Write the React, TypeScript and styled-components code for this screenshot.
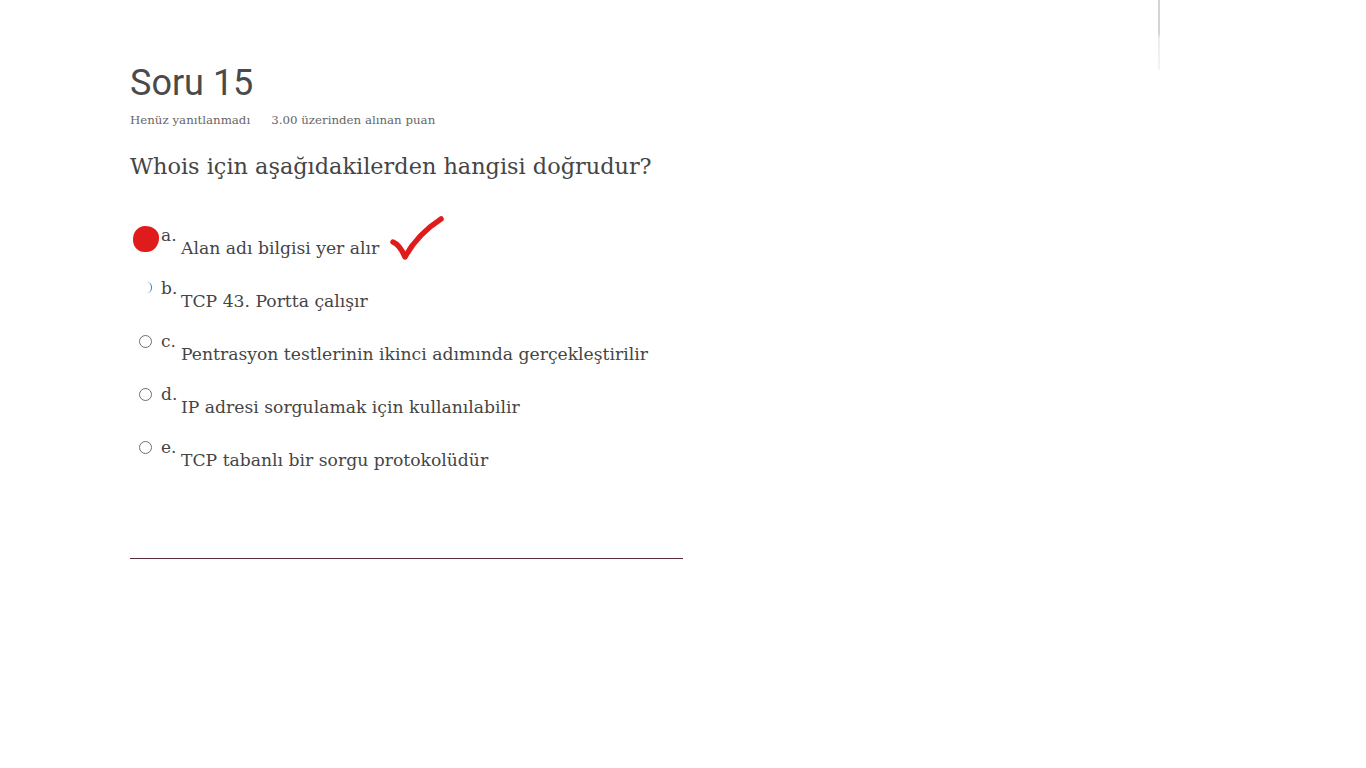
import styled, { createGlobalStyle } from 'styled-components';

const GlobalStyle = createGlobalStyle`
  html, body {
    margin: 0;
    padding: 0;
    background: #ffffff;
  }
`;

const options = [
  { letter: 'a', text: 'Alan adı bilgisi yer alır', mark: 'blob' },
  { letter: 'b', text: 'TCP 43. Portta çalışır', mark: 'arc' },
  { letter: 'c', text: 'Pentrasyon testlerinin ikinci adımında gerçekleştirilir', mark: 'radio' },
  { letter: 'd', text: 'IP adresi sorgulamak için kullanılabilir', mark: 'radio' },
  { letter: 'e', text: 'TCP tabanlı bir sorgu protokolüdür', mark: 'radio' },
];

export default function App() {
  return (
    <Page>
      <GlobalStyle />
      <EdgeLine />
      <Question>
        <Title>Soru 15</Title>
        <Meta>
          <span>Henüz yanıtlanmadı</span>
          <span>3.00 üzerinden alınan puan</span>
        </Meta>
        <Prompt>Whois için aşağıdakilerden hangisi doğrudur?</Prompt>
        <OptionList>
          {options.map((o) => (
            <Option key={o.letter}>
              <RadioSlot>
                {o.mark === 'radio' && <Radio />}
                {o.mark === 'arc' && <HalfRadio />}
                {o.mark === 'blob' && <Blob />}
              </RadioSlot>
              <Letter>{o.letter}.</Letter>
              <AnswerText>{o.text}</AnswerText>
              {o.mark === 'blob' && (
                <Check viewBox="0 0 54 46" width="54" height="46">
                  <path
                    d="M3 26 C8 28 12 34 15 41 C22 28 34 14 51 3"
                    fill="none"
                    stroke="#e01b1b"
                    strokeWidth="5.5"
                    strokeLinecap="round"
                    strokeLinejoin="round"
                  />
                </Check>
              )}
            </Option>
          ))}
        </OptionList>
        <Divider />
      </Question>
    </Page>
  );
}

const Page = styled.div`
  position: relative;
  width: 1366px;
  height: 768px;
  background: #ffffff;
  overflow: hidden;
`;

const EdgeLine = styled.div`
  position: absolute;
  left: 1158px;
  top: 0;
  width: 2px;
  height: 70px;
  background: linear-gradient(#d4d4d4 0, #d4d4d4 33px, #ececec 38px, #f4f4f4 70px);
`;

const Question = styled.div`
  display: flex;
  flex-direction: column;
  padding: 62px 0 0 130px;
  width: 553px;
`;

const Title = styled.h2`
  margin: 0;
  font-family: Roboto, 'Liberation Sans', sans-serif;
  font-size: 36px;
  font-weight: 400;
  line-height: 42px;
  color: #4a4a4a;
`;

const Meta = styled.div`
  display: flex;
  gap: 21px;
  margin-top: 8px;
  font-family: 'DejaVu Serif', 'Liberation Serif', serif;
  font-size: 11.8px;
  line-height: 16px;
  color: #666666;
`;

const Prompt = styled.p`
  margin: 22px 0 0;
  font-family: 'DejaVu Serif', 'Liberation Serif', serif;
  font-size: 22.4px;
  line-height: 32px;
  color: #454545;
`;

const OptionList = styled.div`
  display: flex;
  flex-direction: column;
  margin-top: 47px;
`;

const Option = styled.div`
  position: relative;
  display: flex;
  align-items: flex-start;
  height: 53px;
  font-family: 'DejaVu Serif', 'Liberation Serif', serif;
  color: #454545;
`;

const RadioSlot = styled.div`
  position: relative;
  width: 31px;
  height: 20px;
  flex-shrink: 0;
`;

const Radio = styled.span`
  position: absolute;
  left: 9px;
  top: 0;
  width: 11px;
  height: 11px;
  border: 1px solid #6f6f6f;
  border-radius: 50%;
  background: #ffffff;
`;

const HalfRadio = styled.span`
  position: absolute;
  left: 12px;
  top: 0;
  width: 9px;
  height: 11px;
  border-right: 1.5px solid #3a78c8;
  border-radius: 50%;
`;

const Blob = styled.span`
  position: absolute;
  left: 3px;
  top: -3px;
  width: 26px;
  height: 26px;
  background: #e01b1b;
  border-radius: 48% 55% 50% 45% / 52% 45% 55% 48%;
`;

const Letter = styled.span`
  font-size: 17px;
  line-height: 20px;
  margin-top: -4px;
  width: 20px;
  flex-shrink: 0;
`;

const AnswerText = styled.span`
  font-size: 17.2px;
  line-height: 22px;
  margin-top: 8px;
`;

const Check = styled.svg`
  position: absolute;
  left: 260px;
  top: -13px;
`;

const Divider = styled.hr`
  margin: 64px 0 0;
  border: none;
  height: 1px;
  background: #5b2d3e;
`;
